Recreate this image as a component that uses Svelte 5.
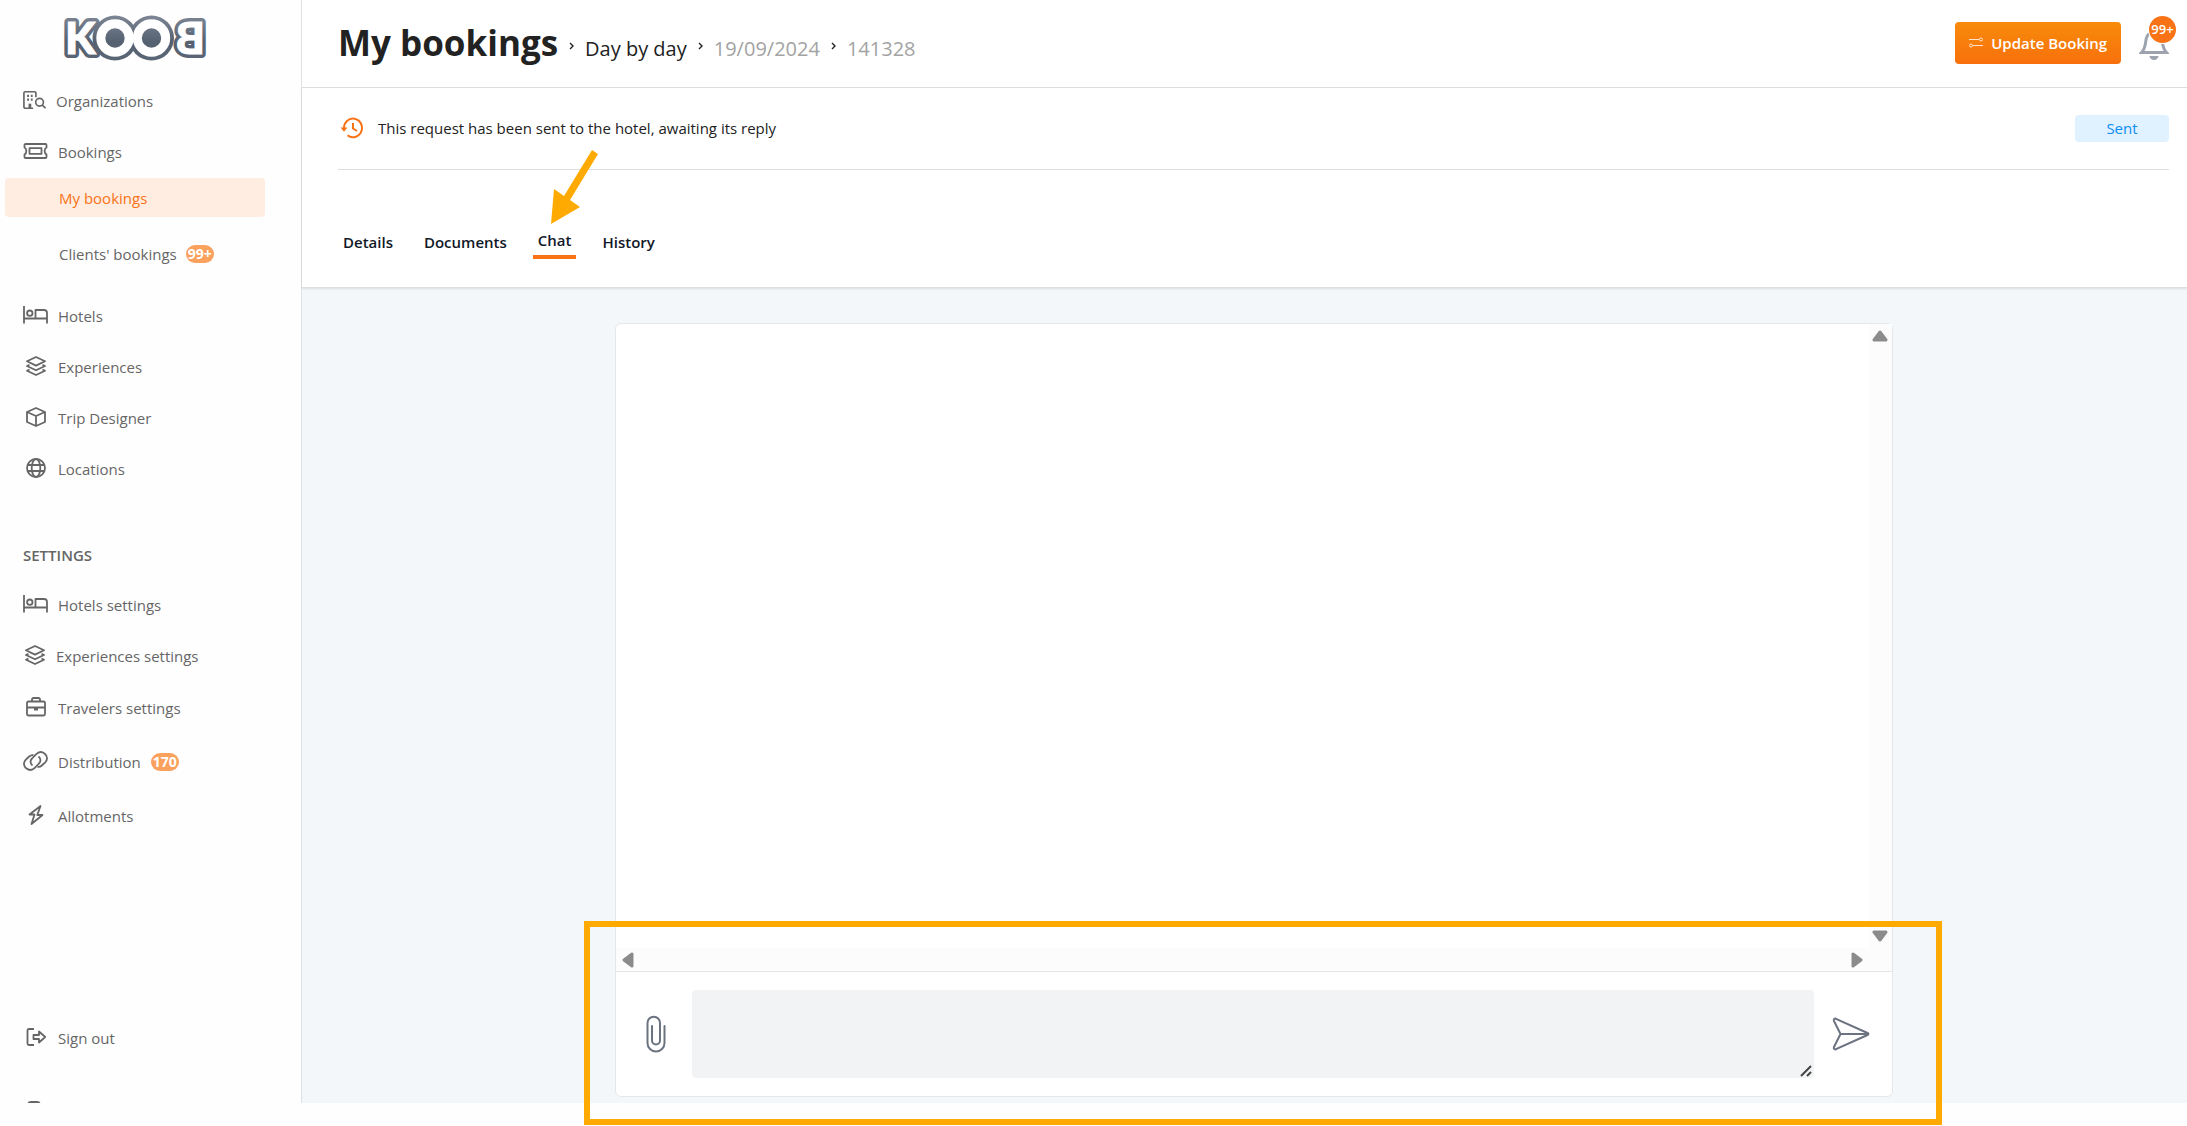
<script lang="ts">
  type NavItem = {
    label: string;
    icon: string;
    badge?: string;
    narrow?: boolean;
    tall?: boolean;
  };

  const bookingItems: NavItem[] = [
    { label: 'Organizations', icon: 'organization', narrow: true },
    { label: 'Bookings', icon: 'ticket' }
  ];

  const catalogItems: NavItem[] = [
    { label: 'Hotels', icon: 'bed' },
    { label: 'Experiences', icon: 'layers' },
    { label: 'Trip Designer', icon: 'box' },
    { label: 'Locations', icon: 'globe' }
  ];

  const settingsItems: NavItem[] = [
    { label: 'Hotels settings', icon: 'bed' },
    { label: 'Experiences settings', icon: 'layers', narrow: true },
    { label: 'Travelers settings', icon: 'briefcase', tall: true },
    { label: 'Distribution', icon: 'link', badge: '170', tall: true },
    { label: 'Allotments', icon: 'bolt', tall: true }
  ];

  const wideIcons = ['organization', 'ticket', 'bed', 'link'];

  const tabs = ['Details', 'Documents', 'Chat', 'History'];

  let activeTab = $state('Chat');
  let message = $state('');
</script>

<svelte:head>
  <title>My bookings | KOOB</title>
</svelte:head>

{#snippet icon(name: string)}
  <svg
    class="icon"
    class:wide={wideIcons.includes(name)}
    viewBox={wideIcons.includes(name) ? '0 0 25 20' : '0 0 20 20'}
    aria-hidden="true"
  >
    {#if name === 'organization'}
      <path d="M11 19H2.500A1.500 1.500 0 0 1 1 17.500V2.500A1.500 1.500 0 0 1 2.500 1h10A1.500 1.500 0 0 1 14 2.500V7" />
      <path d="M4.500 5.500h2M8.500 5.500h2M4.500 9.500h2M8.500 9.500h2" stroke-width="2.500" />
      <path d="M7.500 19v-5" stroke-width="3" />
      <circle cx="18" cy="12.500" r="4.200" />
      <path d="m21 15.500 3.500 3.500" />
    {:else if name === 'ticket'}
      <path d="M2.500 3h20a1 1 0 0 1 1 1v2.500c-2.500 1.500-2.500 5.500 0 7V16a1 1 0 0 1-1 1h-20a1 1 0 0 1-1-1v-2.500c2.500-1.500 2.500-5.500 0-7V4a1 1 0 0 1 1-1z" />
      <path d="M6.500 7.200h12v5.600h-12z" />
    {:else if name === 'bed'}
      <path d="M1 1v17.500M1 13.500h23M24 18.500V8a3 3 0 0 0-3-3h-8.500v8.500" />
      <circle cx="6.800" cy="8.200" r="2.700" />
    {:else if name === 'layers'}
      <path d="m10 1 9 4.300-9 4.300-9-4.300z" />
      <path d="M3.500 8.800 1 10l9 4.300 9-4.300-2.500-1.200" />
      <path d="M3.500 13.500 1 14.700 10 19l9-4.300-2.500-1.200" />
    {:else if name === 'box'}
      <path d="m10 1 9 4v10l-9 4-9-4V5z" />
      <path d="m1 5 9 4 9-4M10 9v10" />
    {:else if name === 'globe'}
      <circle cx="10" cy="10" r="9" />
      <ellipse cx="10" cy="10" rx="4.300" ry="9" />
      <path d="M1.500 7h17M1.500 13h17" />
    {:else if name === 'briefcase'}
      <rect x="1" y="4.500" width="18" height="14" rx="1.500" />
      <path d="M6 4.500V2.500A1.500 1.500 0 0 1 7.500 1h5A1.500 1.500 0 0 1 14 2.500v2M1 10.500h18" />
      <path d="M8 12h4" stroke-width="3" />
    {:else if name === 'link'}
      <path d="M9.500 14.500c-2.500-2-2.500-5-.5-7l4-4.200c2.500-2.500 6-2.800 8.800-.6 2.900 2.500 2.900 6 .4 8.600L18.800 14.500c-1.300 1.300-2.800 1.700-4.300 1.300" />
      <path d="M15.500 5.500c2.500 2 2.500 5 .5 7l-4 4.200c-2.500 2.500-6 2.800-8.800.6C.3 14.800.3 11.300 2.800 8.700L6.200 5.500C7.500 4.200 9 3.800 10.500 4.200" />
    {:else if name === 'bolt'}
      <path d="m14.500 1-11 8.500h5L5.500 19l11-9h-5.200z" />
    {:else if name === 'signout'}
      <path d="M8 2H3a1.500 1.500 0 0 0-1.500 1.500v13A1.500 1.500 0 0 0 3 18h5" />
      <path d="M7.500 8H13V4.500l6.200 5.500-6.200 5.500V12H7.500z" />
    {:else if name === 'page'}
      <path d="M4 6V4a3 3 0 0 1 3-3h6a3 3 0 0 1 3 3v14H4z" />
    {/if}
  </svg>
{/snippet}

{#snippet navLink(item: NavItem)}
  <a class="nav-item" class:narrow={item.narrow} class:tall={item.tall} href="#{item.icon}">
    <span class="icon-slot">{@render icon(item.icon)}</span>
    <span>{item.label}</span>
    {#if item.badge}
      <span class="badge">{item.badge}</span>
    {/if}
  </a>
{/snippet}

{#snippet chevron()}
  <svg class="chevron" viewBox="0 0 5 8" aria-hidden="true"><path d="m1 1 3 3-3 3" /></svg>
{/snippet}

<div class="app">
  <aside>
    <a class="logo" href="#home" aria-label="KOOB">
      <svg width="144" height="64" viewBox="0 -8 144 64" aria-hidden="true">
        <defs>
          <linearGradient id="logo-fill" gradientUnits="userSpaceOnUse" x1="0" y1="2" x2="0" y2="46">
            <stop offset="0" stop-color="#7b8594" />
            <stop offset="0.6" stop-color="#556070" />
            <stop offset="1" stop-color="#5a6575" />
          </linearGradient>
        </defs>
        <g class="logo-edge">
          <text x="2" y="40">K</text>
          <text x="-142" y="40" transform="scale(-1 1)">B</text>
        </g>
        <circle cx="52" cy="24" r="22.500" fill="url(#logo-fill)" />
        <circle cx="88.500" cy="24" r="22.500" fill="url(#logo-fill)" />
        <g class="logo-face">
          <text x="2" y="40">K</text>
          <text x="-142" y="40" transform="scale(-1 1)">B</text>
        </g>
        <circle cx="52" cy="24" r="19.500" fill="url(#logo-fill)" />
        <circle cx="88.500" cy="24" r="19.500" fill="url(#logo-fill)" />
        <circle cx="52" cy="24" r="14.200" class="logo-ring" />
        <circle cx="88.500" cy="24" r="14.200" class="logo-ring" />
      </svg>
    </a>

    <nav aria-label="Main">
      {#each bookingItems as item}
        {@render navLink(item)}
      {/each}
      <a class="sub-item active" href="#my-bookings" aria-current="page">My bookings</a>
      <a class="sub-item spaced" href="#clients-bookings">
        Clients' bookings <span class="badge">99+</span>
      </a>
      {#each catalogItems as item}
        {@render navLink(item)}
      {/each}
    </nav>

    <h2>SETTINGS</h2>
    <nav aria-label="Settings">
      {#each settingsItems as item}
        {@render navLink(item)}
      {/each}
    </nav>

    <div class="sidebar-end">
      {@render navLink({ label: 'Sign out', icon: 'signout' })}
      <a class="cut-item" href="#terms" aria-label="Terms">
        {@render icon('page')}
      </a>
    </div>
  </aside>

  <main>
    <header>
      <div class="breadcrumb">
        <h1>My bookings</h1>
        {@render chevron()}
        <a href="#day">Day by day</a>
        {@render chevron()}
        <span>19/09/2024</span>
        {@render chevron()}
        <span>141328</span>
      </div>
      <button class="update" type="button">
        <svg width="14" height="12" viewBox="0 0 14 12" aria-hidden="true">
          <path d="M0 2.500h10M4 8.500h10" />
          <circle cx="12" cy="2.500" r="1.500" />
          <circle cx="2" cy="8.500" r="1.500" />
        </svg>
        Update Booking
      </button>
      <button class="bell" type="button" aria-label="Notifications">
        <svg width="30" height="34" viewBox="0 0 30 34" aria-hidden="true">
          <path d="M2.500 26.500C8 21 5.500 14 8.500 9.500c3-4.500 10-4.500 13 0 3 4.500.5 11.500 6 17z" />
          <path d="M10.500 30h9a4.500 4 0 0 1-9 0z" class="clapper" />
        </svg>
        <span class="count">99+</span>
      </button>
    </header>

    <section class="request">
      <div class="status">
        <svg width="24" height="22" viewBox="0 0 24 22" aria-hidden="true">
          <path d="M4 11.500A9 9.300 0 1 1 7.500 18.300" />
          <path d="M.5 10.500h7L4 14.800z" class="head" />
          <path d="M13 6v5.500l4 2.500" />
        </svg>
        <p>This request has been sent to the hotel, awaiting its reply</p>
        <span class="pill">Sent</span>
      </div>

      <div class="tabs" role="tablist">
        {#each tabs as tab}
          <button
            type="button"
            role="tab"
            aria-selected={activeTab === tab}
            class:selected={activeTab === tab}
            onclick={() => (activeTab = tab)}
          >
            {tab}
            {#if tab === 'Chat'}
              <svg class="pointer" width="50" height="76" viewBox="0 0 50 76" aria-hidden="true">
                <path d="m44 0 6 4-28 46 10 7L3 74l3-35 10 7z" />
              </svg>
            {/if}
          </button>
        {/each}
      </div>
    </section>

    <section class="content">
      <div class="chat">
        <div class="messages">
          <div class="log" role="log"></div>
          <div class="track vertical" aria-hidden="true">
            <svg width="16" height="12" viewBox="0 0 16 12"><path d="M8 2 14 10H2z" /></svg>
            <svg width="16" height="12" viewBox="0 0 16 12"><path d="M2 2h12L8 10z" /></svg>
          </div>
          <div class="track horizontal" aria-hidden="true">
            <svg width="12" height="16" viewBox="0 0 12 16"><path d="M10 2v12L2 8z" /></svg>
            <svg width="12" height="16" viewBox="0 0 12 16"><path d="M2 2v12l8-6z" /></svg>
          </div>
          <div class="corner"></div>
        </div>

        <form class="composer">
          <button type="button" aria-label="Attach a file">
            <svg width="20" height="38" viewBox="0 0 20 38" aria-hidden="true">
              <path d="M6 11v14.500a4 4 0 0 0 8 0V8A6 6 0 0 0 1.500 8v20a8.500 8.500 0 0 0 17 0V11" />
            </svg>
          </button>
          <div class="field">
            <textarea aria-label="Message" bind:value={message}></textarea>
            <svg class="grip" width="12" height="12" viewBox="0 0 12 12" aria-hidden="true">
              <path d="M1 11 11 1M7 11l4-4" />
            </svg>
          </div>
          <button type="submit" aria-label="Send" onclick={(e) => e.preventDefault()}>
            <svg width="38" height="34" viewBox="0 0 38 34" aria-hidden="true">
              <path d="M8.500 17 2 4C1.300 2.400 2.300 1.200 4 1.800L35.500 16c1.300.6 1.300 1.400 0 2L4 32.200c-1.700.6-2.700-.6-2-2.200zH36" />
            </svg>
          </button>
          <div class="highlight"></div>
        </form>
      </div>
    </section>
  </main>
</div>

<style>
  :global(body) {
    background: #fefefe;
    color: #222;
    font-family: "Segoe UI", "Open Sans", "Noto Sans", sans-serif;
    font-size: 15px;
  }

  .app {
    display: grid;
    grid-template-columns: 301px 1fr;
    box-sizing: border-box;
    min-height: 100vh;
    padding-bottom: 23px;
  }

  h1,
  h2,
  p {
    margin: 0;
  }

  a {
    color: inherit;
    text-decoration: none;
  }

  button {
    border: 0;
    padding: 0;
    background: none;
    color: inherit;
    font: inherit;
    cursor: pointer;
  }

  svg {
    display: block;
    flex: none;
  }

  /* Sidebar */
  aside {
    display: flex;
    flex-direction: column;
    color: #666;
  }

  .logo {
    align-self: flex-start;
    margin: 6px 0 6px 63px;
  }

  .logo text {
    font-family: Lato, sans-serif;
    font-size: 44px;
    font-weight: 900;
  }

  .logo-edge {
    fill: url(#logo-fill);
    stroke: url(#logo-fill);
    stroke-width: 8px;
    stroke-linejoin: round;
  }

  .logo-face {
    fill: #fff;
    stroke: #fff;
    stroke-width: 1px;
  }

  .logo-ring {
    fill: none;
    stroke: #fff;
    stroke-width: 9px;
  }

  .nav-item {
    display: flex;
    align-items: center;
    gap: 10px;
    box-sizing: border-box;
    height: 51px;
    padding: 0 0 2px 23px;
  }

  .nav-item.tall {
    height: 54px;
  }

  .icon-slot {
    display: flex;
    justify-content: center;
    width: 25px;
    padding-bottom: 2px;
  }

  .narrow .icon-slot {
    width: 23px;
  }

  .icon {
    width: 20px;
    height: 20px;
    fill: none;
    stroke: #666;
    stroke-width: 1.8px;
    stroke-linejoin: round;
  }

  .icon.wide {
    width: 25px;
  }

  .narrow .icon.wide {
    width: 23px;
  }

  .sub-item {
    display: flex;
    align-items: center;
    gap: 9px;
    height: 39px;
    margin: 0 36px 0 5px;
    padding-left: 54px;
    border-radius: 4px;
  }

  .sub-item.spaced {
    height: 74px;
  }

  .sub-item.active {
    background: #ffede1;
    color: #f97316;
  }

  .badge {
    padding: 0 2px;
    border-radius: 9px;
    background: #fba15e;
    color: #fff;
    font-size: 14px;
    font-weight: 700;
    line-height: 18px;
  }

  h2 {
    margin: 50px 0 14px 23px;
    font-size: 15px;
    font-weight: 600;
    line-height: 21px;
  }

  .sidebar-end {
    margin-top: auto;
  }

  .cut-item {
    display: block;
    height: 2px;
    margin-top: 37px;
    padding-left: 24px;
    overflow: hidden;
  }

  /* Main column */
  main {
    display: flex;
    flex-direction: column;
    border-left: 1px solid #dfe2e5;
    background: #f3f7fa;
  }

  header {
    display: flex;
    align-items: center;
    box-sizing: border-box;
    height: 88px;
    padding: 0 18px 1px 36px;
    border-bottom: 1px solid #dedede;
    background: #fff;
  }

  .breadcrumb {
    display: flex;
    align-items: baseline;
    gap: 11px;
    margin-right: auto;
    color: #a3a3a3;
    font-size: 20px;
  }

  .breadcrumb a {
    color: #222;
  }

  h1 {
    color: #222;
    font-size: 35px;
    font-weight: 700;
    line-height: 48px;
  }

  .chevron {
    align-self: center;
    width: 5px;
    height: 8px;
    margin-top: 6px;
    fill: none;
    stroke: #222;
    stroke-width: 1.4px;
  }

  .update {
    display: flex;
    align-items: center;
    gap: 8px;
    height: 42px;
    margin-right: 18px;
    padding: 0 14px;
    border-radius: 4px;
    background: linear-gradient(#f78b0b, #f8700c);
    color: #fff;
    font-weight: 600;
  }

  .update svg {
    fill: none;
    stroke: #ffe3cc;
  }

  .bell {
    position: relative;
  }

  .bell svg {
    fill: none;
    stroke: #9ca3af;
    stroke-width: 3px;
  }

  .bell .clapper {
    fill: #9ca3af;
    stroke: none;
  }

  .count {
    position: absolute;
    top: -10px;
    right: -7px;
    width: 27px;
    border-radius: 50%;
    background: #f97316;
    box-shadow: 0 0 0 1px #fff;
    color: #fff;
    font-size: 13px;
    font-weight: 600;
    line-height: 27px;
    text-align: center;
  }

  .request {
    padding: 0 18px 0 36px;
    border-bottom: 1px solid #dedede;
    background: #fff;
    box-shadow: 0 1px 2px #0000001a;
  }

  .status {
    display: flex;
    align-items: center;
    gap: 14px;
    box-sizing: border-box;
    height: 82px;
    padding: 0 0 1px 2px;
    border-bottom: 1px solid #dedede;
  }

  .status svg {
    fill: none;
    stroke: #f97316;
    stroke-width: 2px;
  }

  .status .head {
    fill: #f97316;
    stroke: none;
  }

  .pill {
    width: 94px;
    margin-left: auto;
    border-radius: 4px;
    background: #e0f1ff;
    color: #0d8ff2;
    line-height: 27px;
    text-align: center;
  }

  .tabs {
    display: flex;
    align-items: center;
    gap: 21px;
    height: 117px;
    color: #111827;
  }

  .tabs button {
    position: relative;
    margin-top: 27px;
    padding: 0 5px;
    font-weight: 600;
    line-height: 22px;
  }

  .tabs .selected {
    padding: 4px 5px;
    border-bottom: 4px solid #f97316;
  }

  .pointer {
    position: absolute;
    bottom: 29px;
    left: 15px;
    fill: #fa0;
  }

  .content {
    display: flex;
    flex: 1;
    justify-content: center;
    padding: 35px 18px 6px 36px;
  }

  .chat {
    display: flex;
    flex: 0 1 1278px;
    flex-direction: column;
    box-sizing: border-box;
    border: 1px solid #e5e7eb;
    border-radius: 6px;
    background: #fff;
  }

  .messages {
    display: grid;
    flex: 1;
    grid-template-columns: 1fr 23px;
    grid-template-rows: 1fr 23px;
  }

  .track {
    display: flex;
    align-items: center;
    justify-content: space-between;
    background: #fcfcfc;
  }

  .track svg {
    fill: #8b8b8b;
    stroke: #8b8b8b;
    stroke-width: 3px;
    stroke-linejoin: round;
  }

  .vertical {
    flex-direction: column;
    padding: 6px 0;
  }

  .horizontal {
    padding: 0 6px;
  }

  .corner {
    background: #fcfcfc;
  }

  .composer {
    position: relative;
    display: flex;
    align-items: center;
    gap: 18px;
    padding: 18px 22px 18px 30px;
    border-top: 1px solid #e5e7eb;
  }

  .composer svg {
    fill: none;
    stroke: #6b7280;
    stroke-width: 2px;
    stroke-linecap: round;
    stroke-linejoin: round;
  }

  .composer button:first-child {
    margin-right: 8px;
  }

  .field {
    position: relative;
    display: flex;
    flex: 1;
  }

  textarea {
    flex: 1;
    box-sizing: border-box;
    min-width: 0;
    height: 88px;
    padding: 8px 12px;
    border: 0;
    border-radius: 4px;
    background: #f2f3f5;
    font: inherit;
    resize: none;
  }

  .composer .grip {
    position: absolute;
    right: 2px;
    bottom: 1px;
    stroke: #444;
    stroke-linecap: butt;
  }

  .highlight {
    position: absolute;
    inset: -51px -50px -29px -32px;
    border: 6px solid #fa0;
    pointer-events: none;
  }
</style>
